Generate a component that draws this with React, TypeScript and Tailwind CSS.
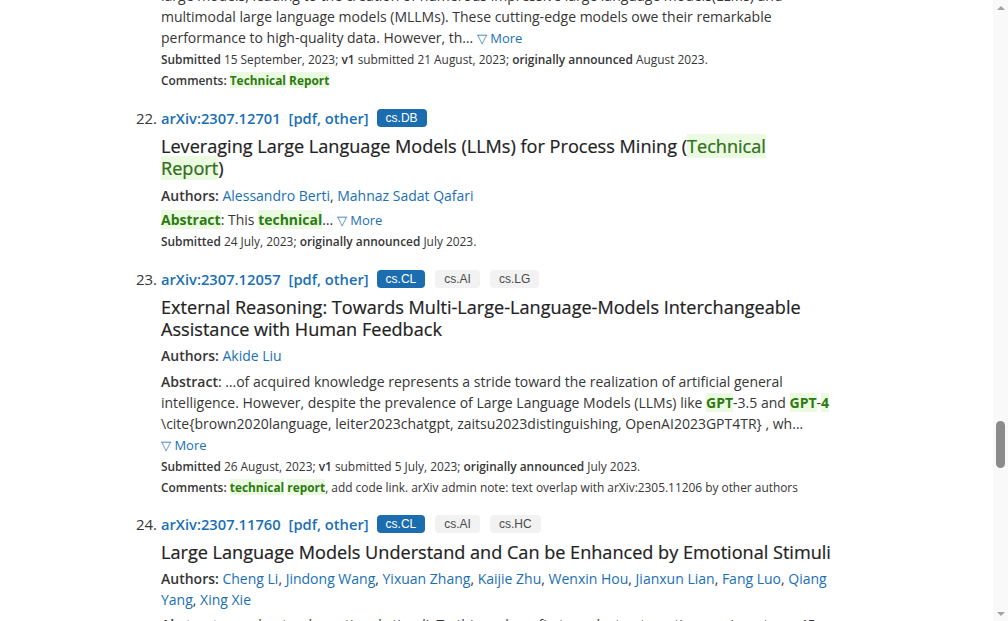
import React from 'react';

const link = 'text-[#1a6fb5]';

function Hit({ children, bold = false }: { children: React.ReactNode; bold?: boolean }) {
  return (
    <span className={`bg-[#ebfbe1] text-[#2d7a12] ${bold ? 'font-bold' : ''}`}>{children}</span>
  );
}

function More() {
  return <span className={`${link} text-[13px] whitespace-nowrap`}>▽ More</span>;
}

function Tag({ name, primary = false }: { name: string; primary?: boolean }) {
  return (
    <span
      className={`inline-flex items-center h-[18px] px-[9px] rounded-[4px] text-[12px] font-['Liberation_Sans',Arial,sans-serif] ${
        primary ? 'bg-[#1c6db0] text-white' : 'bg-[#f2f2f2] text-[#4a4a4a] ml-[10px]'
      }`}
    >
      {name}
    </span>
  );
}

function ListTitle({ n, id, tags }: { n: number; id: string; tags: { name: string; primary?: boolean }[] }) {
  return (
    <div className="flex items-center h-[22px] text-[14.7px]">
      <span className="w-[161px] shrink-0 text-right text-[#363636] pr-[4px] text-[15px]">{n}.</span>
      <span className={`${link} font-semibold`}>arXiv:{id}</span>
      <span className={`${link} font-semibold ml-[8px]`}>[pdf, other]</span>
      <span className="ml-[8px] flex">
        {tags.map((t) => (
          <Tag key={t.name} name={t.name} primary={t.primary} />
        ))}
      </span>
    </div>
  );
}

function Meta({ children }: { children: React.ReactNode }) {
  return <p className="text-[11.9px] leading-[21px] text-[#363636]">{children}</p>;
}

function Scrollbar() {
  return (
    <div className="w-[15px] shrink-0 h-[621px] bg-[#f9f9f9] flex flex-col items-center">
      <div className="h-[15px] flex items-center justify-center">
        <div className="w-0 h-0 border-x-[4px] border-x-transparent border-b-[4px] border-b-[#a3a3a3]" />
      </div>
      <div className="flex-1 flex flex-col items-center">
        <div className="h-[406px]" />
        <div className="w-[9px] h-[47px] rounded-full bg-[#8b8b8b]" />
      </div>
      <div className="h-[15px] flex items-center justify-center">
        <div className="w-0 h-0 border-x-[4px] border-x-transparent border-t-[4px] border-t-[#a3a3a3]" />
      </div>
    </div>
  );
}

const body = 'pl-[161px] w-[833px]';
const title = 'text-[18.1px] leading-[22px] mt-[6px] text-[#222222] [-webkit-text-stroke:0.2px_#222222]';

export default function App() {
  return (
    <div className="flex w-[1008px] h-[621px] overflow-hidden bg-white font-['Open_Sans',sans-serif] text-[#363636]">
      <div className="flex-1 overflow-hidden">
        <div className={`${body} -mt-[15px]`}>
          <p className="text-[14px] leading-[21px]">
            large models, leading to the creation of numerous impressive large language models(LLMs) and
            multimodal large language models (MLLMs). These cutting-edge models owe their remarkable
            performance to high-quality data. However, th… <More />
          </p>
          <Meta>
            <span className="font-semibold">Submitted</span> 15 September, 2023;{' '}
            <span className="font-semibold">v1</span> submitted 21 August, 2023;{' '}
            <span className="font-semibold">originally announced</span> August 2023.
          </Meta>
          <Meta>
            <span className="font-semibold">Comments: </span>
            <Hit bold>Technical</Hit> <Hit bold>Report</Hit>
          </Meta>
        </div>

        <div className="mt-[16px]">
          <ListTitle n={22} id="2307.12701" tags={[{ name: 'cs.DB', primary: true }]} />
          <div className={body}>
            <h2 className={title}>
              Leveraging Large Language Models (LLMs) for Process Mining (<Hit>Technical</Hit>{' '}
              <Hit>Report</Hit>)
            </h2>
            <p className="text-[14px] leading-[21px] mt-[6px]">
              <span className="font-semibold">Authors: </span>
              <span className={link}>Alessandro Berti</span>, <span className={link}>Mahnaz Sadat Qafari</span>
            </p>
            <p className="text-[14px] leading-[21px] mt-[3px]">
              <Hit bold>Abstract</Hit>: This <Hit bold>technical</Hit>… <More />
            </p>
            <Meta>
              <span className="font-semibold">Submitted</span> 24 July, 2023;{' '}
              <span className="font-semibold">originally announced</span> July 2023.
            </Meta>
          </div>
        </div>

        <div className="mt-[16px]">
          <ListTitle
            n={23}
            id="2307.12057"
            tags={[{ name: 'cs.CL', primary: true }, { name: 'cs.AI' }, { name: 'cs.LG' }]}
          />
          <div className={body}>
            <h2 className={title}>
              External Reasoning: Towards Multi-Large-Language-Models Interchangeable Assistance with Human
              Feedback
            </h2>
            <p className="text-[14px] leading-[21px] mt-[5px]">
              <span className="font-semibold">Authors: </span>
              <span className={link}>Akide Liu</span>
            </p>
            <p className="text-[14px] leading-[21px] mt-[5px]">
              <span className="font-semibold">Abstract</span>: …of acquired knowledge represents a stride toward
              the realization of artificial general intelligence. However, despite the prevalence of Large
              Language Models (LLMs) like <Hit bold>GPT</Hit>-3.5 and <Hit bold>GPT</Hit>-<Hit bold>4</Hit>{' '}
              \cite&#123;brown2020language, leiter2023chatgpt, zaitsu2023distinguishing, OpenAI2023GPT4TR&#125; ,
              wh… <More />
            </p>
            <Meta>
              <span className="font-semibold">Submitted</span> 26 August, 2023;{' '}
              <span className="font-semibold">v1</span> submitted 5 July, 2023;{' '}
              <span className="font-semibold">originally announced</span> July 2023.
            </Meta>
            <Meta>
              <span className="font-semibold">Comments: </span>
              <Hit bold>technical</Hit> <Hit bold>report</Hit>, add code link. arXiv admin note: text overlap with
              arXiv:2305.11206 by other authors
            </Meta>
          </div>
        </div>

        <div className="mt-[15px]">
          <ListTitle
            n={24}
            id="2307.11760"
            tags={[{ name: 'cs.CL', primary: true }, { name: 'cs.AI' }, { name: 'cs.HC' }]}
          />
          <div className={body}>
            <h2 className={title}>Large Language Models Understand and Can be Enhanced by Emotional Stimuli</h2>
            <p className="text-[14px] leading-[21px] mt-[5px]">
              <span className="font-semibold">Authors: </span>
              <span className={link}>Cheng Li</span>, <span className={link}>Jindong Wang</span>,{' '}
              <span className={link}>Yixuan Zhang</span>, <span className={link}>Kaijie Zhu</span>,{' '}
              <span className={link}>Wenxin Hou</span>, <span className={link}>Jianxun Lian</span>,{' '}
              <span className={link}>Fang Luo</span>, <span className={link}>Qiang Yang</span>,{' '}
              <span className={link}>Xing Xie</span>
            </p>
            <p className="text-[14px] leading-[21px] mt-[4px]">
              <span className="font-semibold">Abstract</span>: …understand emotional stimuli. To this end, we
              first conduct automatic experiments on 45 tasks using various LLMs
            </p>
          </div>
        </div>
      </div>
      <Scrollbar />
    </div>
  );
}
